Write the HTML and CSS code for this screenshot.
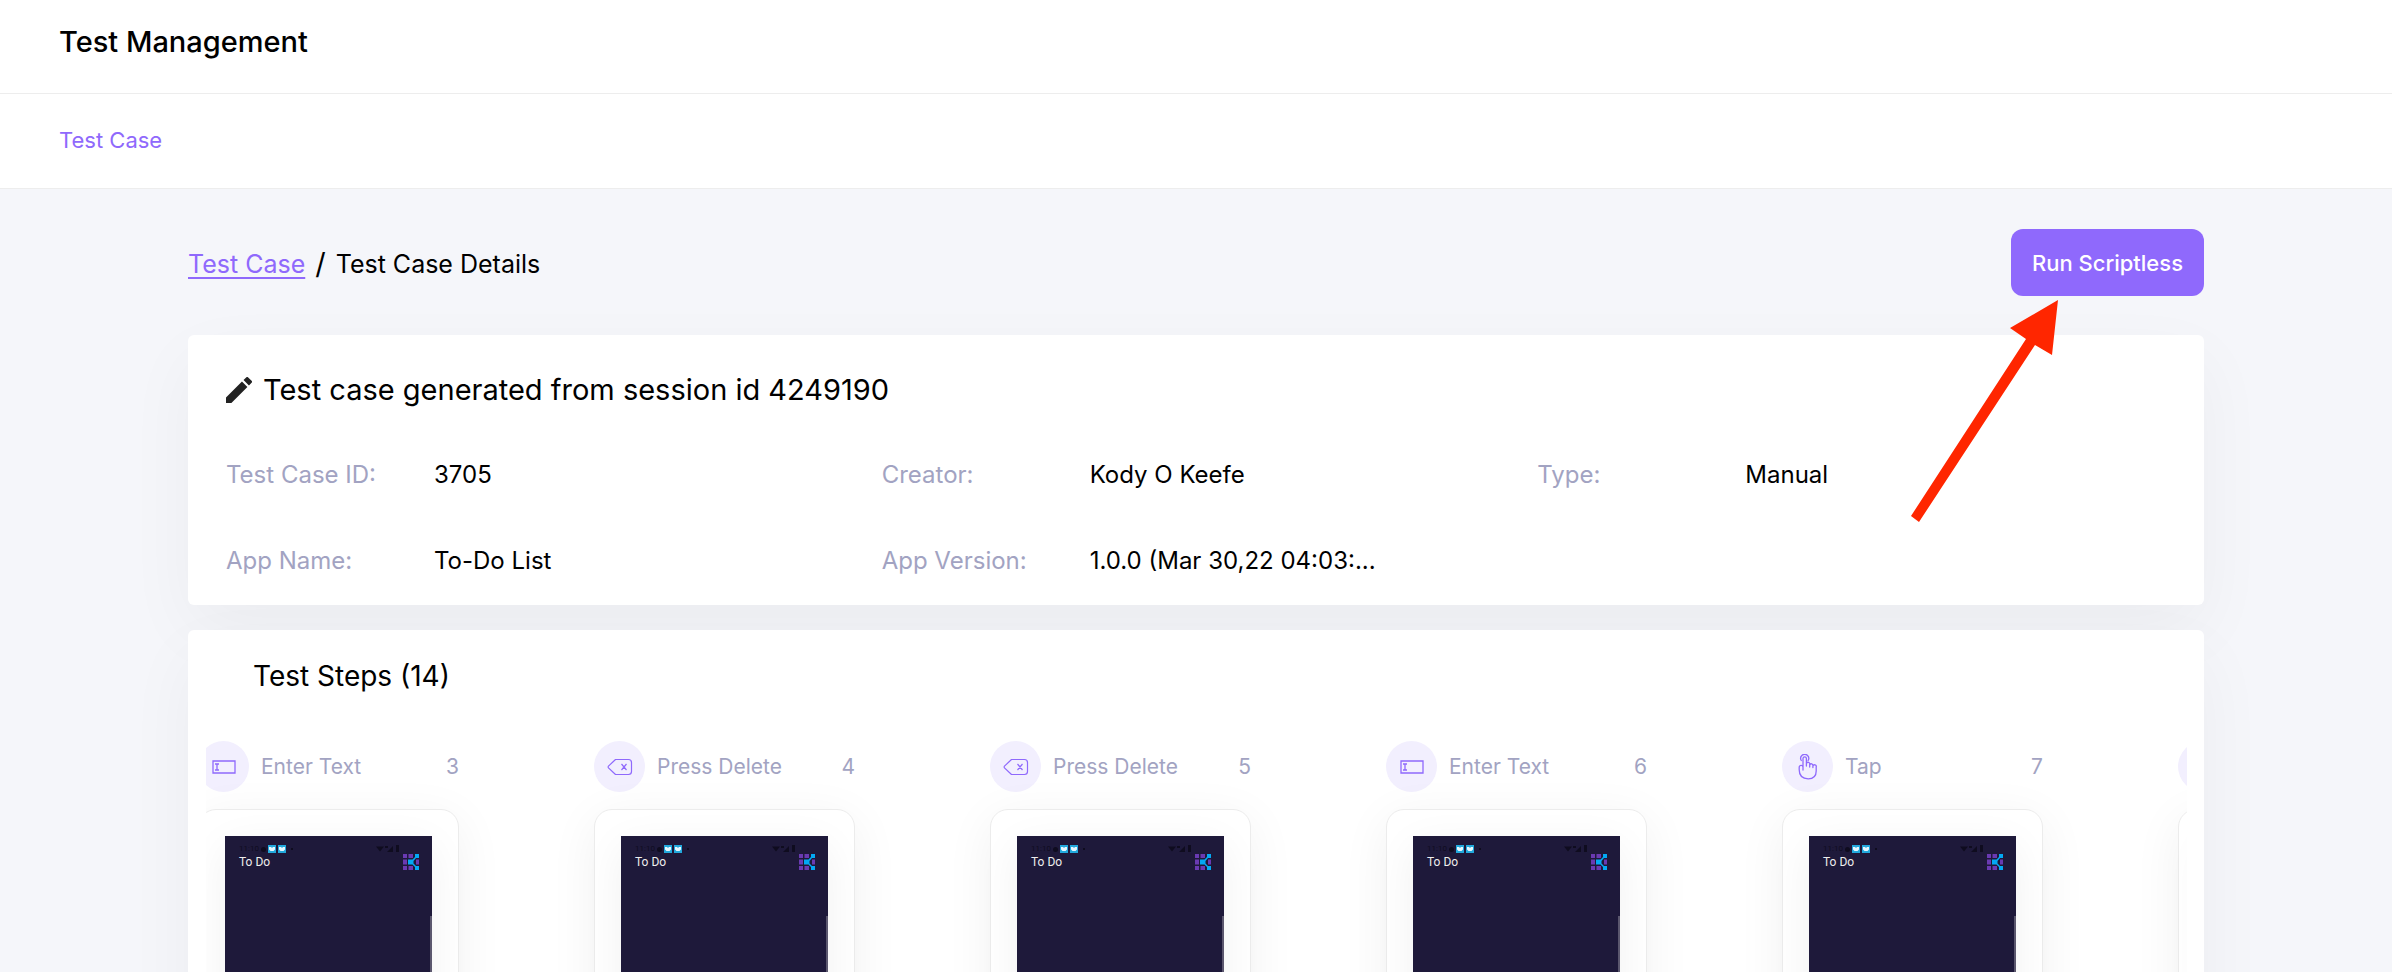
FILE: index.html
```html
<!DOCTYPE html>
<html lang="en">
<head>
<meta charset="utf-8">
<title>Test Management</title>
<link rel="stylesheet" href="styles.css">
</head>
<body>
<svg class="sprite" aria-hidden="true">
  <symbol id="i-text" viewBox="0 0 24 14"><path d="M1 1h22v12H1zM3 4h4M3 10h4M5 4v6" fill="none" stroke="currentColor" stroke-width="1.3"/></symbol>
  <symbol id="i-delete" viewBox="0 0 26 18"><path d="M8.500 1.500H21.500Q24.500 1.500 24.500 4.500V13.500Q24.500 16.500 21.500 16.500H8.500L1.200 9.600V8.400ZM14.500 6l5 6M19.500 6l-5 6" fill="none" stroke="currentColor" stroke-width="1.200" stroke-linejoin="round"/></symbol>
  <symbol id="i-tap" viewBox="0 0 20 26"><path d="M5 16V4.500a1.700 1.700 0 0 1 3.400 0V12M8.400 9.500a1.600 1.600 0 0 1 3.300 1V13M11.700 11a1.500 1.500 0 0 1 3.200.8V13.500M14.900 12a1.600 1.600 0 0 1 3.300 1v4c0 5-3 7.800-8 7.800-5.500 0-9-3-9-9v-2.600a1.900 1.900 0 0 1 3.800 0M3.300 6.500a4 4 0 1 1 6.800 0" fill="none" stroke="currentColor" stroke-width="1.300" stroke-linecap="round" stroke-linejoin="round"/></symbol>
  <symbol id="i-android" viewBox="0 0 8 8"><path d="M0 0h8v8H0z" fill="#22a9dc"/><path d="M1 2h2l1 1 1-1h2v2.500L5.500 6h-3L1 4.500z" fill="#e6f8ff"/></symbol>
  <symbol id="i-logo" viewBox="0 0 16 16"><path d="M0 0h4v4H0zM5.500 0h4.500v4H5.500zM0 5.500h4v5H0zM0 12h4v4H0zM5.500 12h4.500v4H5.500zM13 5.500h3v5h-3z" fill="#6a3ab2"/><path d="M5 5.500h4.500L12 3V0h4v4h-3l-2.500 3v2.500l2.500 2.500h3v4h-4v-3L9.500 10.500H5z" fill="#03a9f4"/></symbol>
  <symbol id="i-status" viewBox="0 0 24 8"><path d="M0 1.500h8L4 6.500zM9 1h3v2H9zM17 1v6h-6zM20 0h3v7h-3z" fill="#0f0c1f"/></symbol>
</svg>
<div class="app">
  <header class="topbar"><h1>Test Management</h1></header>
  <nav class="tabs"><a href="#">Test Case</a></nav>
  <main>
    <div class="pagehead">
      <div class="crumbs"><a href="#">Test Case</a><span class="slash">/</span><span>Test Case Details</span></div>
      <div class="action">
        <button type="button">Run Scriptless</button>
        <svg class="arrow" viewBox="0 0 150 224" aria-hidden="true"><path d="M148 0 142 55 125 45 9 222 1 216 116 39 100 28Z" fill="#ff2600"/></svg>
      </div>
    </div>
    <section class="card info">
      <h2><svg class="pencil" viewBox="3 3 18 18" aria-hidden="true"><path d="M3 17.250V21h3.750L17.810 9.940l-3.750-3.750zM20.710 7.040a1 1 0 0 0 0-1.410l-2.340-2.340a1 1 0 0 0-1.410 0l-1.830 1.830 3.750 3.750z" fill="#222"/></svg>Test case generated from session id 4249190</h2>
      <dl class="facts">
        <div><dt>Test Case ID:</dt><dd>3705</dd></div>
        <div><dt>Creator:</dt><dd>Kody O Keefe</dd></div>
        <div><dt>Type:</dt><dd>Manual</dd></div>
        <div><dt>App Name:</dt><dd>To-Do List</dd></div>
        <div><dt>App Version:</dt><dd>1.0.0 (Mar 30,22 04:03:...</dd></div>
      </dl>
    </section>
    <section class="card steps">
      <h2>Test Steps (14)</h2>
      <div class="viewport">
        <ol class="track" id="track"></ol>
      </div>
    </section>
  </main>
</div>
<script src="steps.js"></script>
</body>
</html>
```
FILE: steps.js
```js
const steps = [
  ["text", "Enter Text", 3],
  ["delete", "Press Delete", 4],
  ["delete", "Press Delete", 5],
  ["text", "Enter Text", 6],
  ["tap", "Tap", 7],
  null
];

const phone = `
  <div class="status"><span>11:10</span><i class="gear"></i><svg class="app-icon"><use href="#i-android"/></svg><svg class="app-icon"><use href="#i-android"/></svg><i class="dot"></i><svg class="signal"><use href="#i-status"/></svg></div>
  <div class="appbar"><span>To Do</span><svg class="logo"><use href="#i-logo"/></svg></div>
  <div class="thumb"></div>`;

document.getElementById("track").innerHTML = steps.map(step => step ? `
  <li class="step">
    <div class="step-head">
      <span class="badge"><svg class="icon-${step[0]}"><use href="#i-${step[0]}"/></svg></span>
      <span>${step[1]}</span><span class="num">${step[2]}</span>
    </div>
    <div class="frame"><div class="screen">${phone}</div></div>
  </li>` : `
  <li class="step">
    <div class="step-head"><span class="badge"></span></div>
    <div class="frame"><div class="screen"></div></div>
  </li>`).join("");
```
FILE: styles.css
```css
* { box-sizing: border-box; }
body { margin: 0; font-family: Inter, "Liberation Sans", sans-serif; color: #000; background: #f5f6fa; }
h1, h2, dl, dd, ol { margin: 0; padding: 0; font-weight: 400; }
.sprite { display: none; }
.app { height: 100vh; overflow: hidden; }
.topbar { height: 94px; padding: 24px 59px; background: #fff; border-bottom: 1px solid #ededed; }
.topbar h1 { font-size: 29px; line-height: 36px; font-weight: 500; }
.tabs { height: 95px; padding: 32px 59px; background: #fff; border-bottom: 1px solid #ededed; font-size: 22px; line-height: 28px; }
.tabs a { color: #8f69fc; text-decoration: none; }
main { padding: 40px 188px 0; }
.pagehead { display: flex; justify-content: space-between; align-items: center; margin-bottom: 39px; }
.crumbs { display: flex; align-items: center; gap: 10px; padding-top: 2px; font-size: 25px; line-height: 32px; }
.crumbs a { color: #8f69fc; text-underline-offset: 4px; text-decoration-thickness: 2px; }
.slash { font-size: 29px; }
.action { position: relative; z-index: 2; }
button { height: 67px; padding: 0 21px; border: 0; border-radius: 12px; background: #8f69fc; color: #fff; font: 500 22px/28px Inter, sans-serif; }
.arrow { position: absolute; top: 71px; right: 144px; width: 150px; height: 224px; }
.card { background: #fff; border-radius: 6px; box-shadow: 0 25px 70px rgba(0, 0, 0, .045); }
.info { height: 270px; padding: 36px 11px 0 38px; margin-bottom: 25px; }
.info h2 { display: flex; align-items: center; gap: 11px; font-size: 29px; line-height: 38px; }
.pencil { width: 26px; height: 26px; }
.facts { display: grid; grid-template-columns: repeat(3, 1fr); row-gap: 54px; margin-top: 50px; font-size: 24px; line-height: 32px; }
.facts div { display: grid; grid-template-columns: 208px 1fr; }
.facts dt { color: #a2a3c2; }
.facts dd { white-space: nowrap; }
.steps { padding: 28px 17px 0 18px; height: 500px; }
.steps h2 { padding-left: 47px; font-size: 28px; line-height: 36px; }
.viewport { overflow: hidden; margin-top: 12px; padding-top: 35px; }
.track { display: flex; gap: 135px; list-style: none; margin-left: -8px; }
.step { flex: 0 0 261px; }
.step-head { display: flex; align-items: center; gap: 12px; height: 51px; margin-bottom: 17px; color: #a2a3c2; font-size: 21px; line-height: 28px; }
.badge { display: flex; align-items: center; justify-content: center; width: 51px; height: 51px; border-radius: 50%; background: #f2effe; color: #8f69fc; }
.icon-text { width: 24px; height: 14px; }
.icon-delete { width: 26px; height: 18px; }
.icon-tap { width: 20px; height: 26px; }
.num { margin-left: auto; }
.frame { position: relative; height: 560px; padding: 26px; border: 1px solid #ececec; border-radius: 18px; background: #fff; box-shadow: 0 10px 50px rgba(0, 0, 0, .06); }
.screen { height: 430px; padding: 8px 0 0 14px; background: #1e193a; box-shadow: 0 10px 40px rgba(0, 0, 0, .06); font-family: Roboto, sans-serif; }
.status { display: flex; align-items: center; gap: 2px; height: 10px; padding-right: 32px; color: #0f0c1f; font-size: 8px; line-height: 10px; }
.gear { width: 5px; height: 5px; border-radius: 50%; background: #0f0c1f; }
.app-icon { width: 8px; height: 8px; }
.dot { width: 2px; height: 2px; margin-left: 3px; background: #0f0c1f; }
.signal { width: 24px; height: 8px; margin-left: auto; }
.appbar { display: flex; justify-content: space-between; align-items: flex-end; padding-right: 13px; color: #eee; font-size: 12px; line-height: 16px; }
.logo { width: 16px; height: 16px; }
.thumb { width: 2px; height: 300px; margin: 46px 0 0 auto; background: #5b576e; }
```
